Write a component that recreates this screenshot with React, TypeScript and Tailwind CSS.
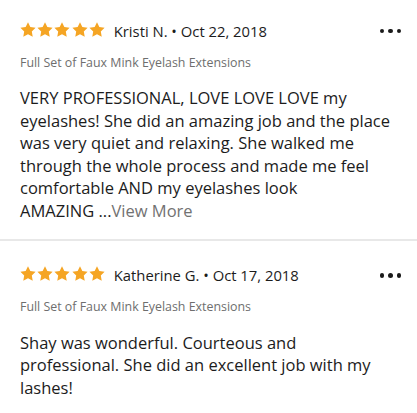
import React from "react";

function Star() {
  return (
    <svg width="16" height="15" viewBox="0 0 24 22.6" preserveAspectRatio="none" className="shrink-0">
      <path
        d="M12 0.3l3.5 7.2 7.9 1.1-5.7 5.6 1.4 7.9L12 18.3l-7.1 3.8 1.4-7.9L0.6 8.6l7.9-1.1z"
        fill="#f5a524"
      />
    </svg>
  );
}

function Dots() {
  return (
    <div className="flex items-center gap-[4px] ml-auto mr-[16px]">
      <span className="w-[4.5px] h-[4.5px] rounded-full bg-[#1a1a1a]" />
      <span className="w-[4.5px] h-[4.5px] rounded-full bg-[#1a1a1a]" />
      <span className="w-[4.5px] h-[4.5px] rounded-full bg-[#1a1a1a]" />
    </div>
  );
}

function Review({
  name,
  date,
  body,
  more,
  pt,
  pb,
  border,
}: {
  name: string;
  date: string;
  body: string;
  more?: boolean;
  pt: string;
  pb: string;
  border?: boolean;
}) {
  return (
    <div className={`${pt} ${pb} pl-[20px] ${border ? "border-b-2 border-[#e8e8e8]" : ""}`}>
      <div className="flex items-center h-[22px]">
        <div className="flex items-center gap-[1.2px] mb-[3px]">
          <Star />
          <Star />
          <Star />
          <Star />
          <Star />
        </div>
        <span className="ml-[9px] text-[14.8px] text-[#1c1c1c] leading-[22px]">
          {name} • {date}
        </span>
        <Dots />
      </div>
      <div className="mt-[13px] text-[12.4px] leading-[16px] text-[#6e6e6e]">
        Full Set of Faux Mink Eyelash Extensions
      </div>
      <div className="mt-[16.4px] pr-[20px] text-[16.5px] leading-[22.5px] text-[#1c1c1c]">
        {body}
        {more && <span className="text-[#727272]">View More</span>}
      </div>
    </div>
  );
}

export default function App() {
  return (
    <div
      className="w-[417px] h-[413px] bg-white overflow-hidden"
      style={{ fontFamily: '"Open Sans", sans-serif' }}
    >
      <Review
        name="Kristi N."
        date="Oct 22, 2018"
        body={"VERY PROFESSIONAL, LOVE LOVE LOVE my eyelashes! She did an amazing job and the place was very quiet and relaxing. She walked me through the whole process and made me feel comfortable AND my eyelashes look AMAZING\u00a0..."}
        more
        pt="pt-[20px]"
        pb="pb-[16.6px]"
        border
      />
      <Review
        name="Katherine G."
        date="Oct 17, 2018"
        body="Shay was wonderful. Courteous and professional. She did an excellent job with my lashes!"
        pt="pt-[23.5px]"
        pb="pb-[10px]"
      />
    </div>
  );
}
